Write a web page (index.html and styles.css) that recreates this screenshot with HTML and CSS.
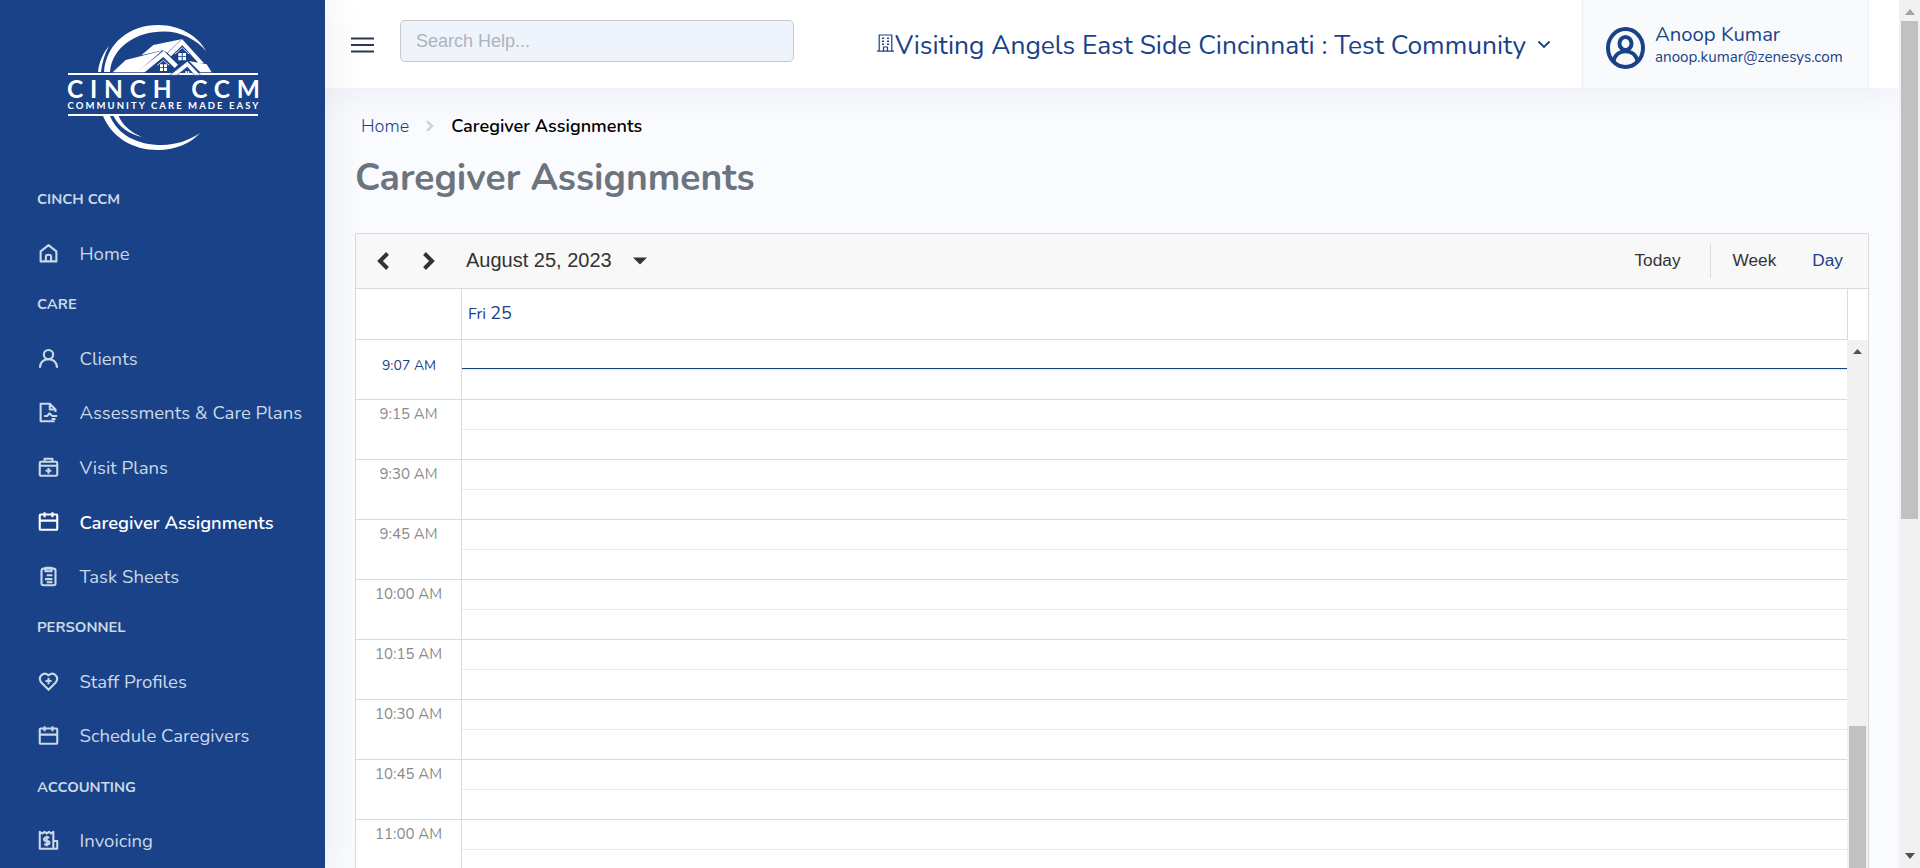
FILE: index.html
```
<!DOCTYPE html>
<html lang="en">
<head>
<meta charset="utf-8">
<title>Caregiver Assignments</title>
<link rel="stylesheet" href="styles.css">
</head>
<body>
<div class="app">
  <aside class="sidebar">
    <svg class="logo" viewBox="0 0 325 175" width="325" height="175" fill="#fff">
      <path d="M104 72C106 43 130 25 158 25C180 25 198 36 206.500 51.500C196 39 180 31.500 164 31.500C136 31.500 112 47 110 72Z"/>
      <path d="M98 72C99 62 103 53 109 46C104.500 54 102 63 101 72Z"/>
      <path d="M103 116H110C118 135 137 145 162 145C176 145 190 140 200 133C191 143 176 150 158 150C132 150 112 137 103 116Z"/>
      <path d="M113.500 116H118.500C123 126 132 133 142 137C129 134 119 127 113.500 116Z"/>
      <path d="M68 73H258V75H68ZM68 114H258V116H68Z"/>
      <g transform="translate(40 10) scale(.33333)">
        <path d="M218 187L257 150L366 122L292 187Z"/>
        <path d="M290 187L371 122L414 164L404 174L370 141L314 187Z"/>
        <path d="M304 136L340 105L424 88L382 128L368 121Z"/>
        <path d="M383 129L426 87L492 160H476L427 106L393 139Z"/>
        <path d="M447 153L500 163L515 187H481Z"/>
        <path d="M389 196L442 154L482 196H464L442 171L411 196Z" stroke="#1a4289" stroke-width="2"/>
        <path d="M352 166L370 151L388 166" fill="none" stroke="#fff" stroke-width="2.500"/>
        <path d="M405 132L427 113L447 132" fill="none" stroke="#fff" stroke-width="2.500"/>
        <path d="M360 163H369V172H360ZM372 163H381V172H372ZM360 174H369V183H360ZM372 174H381V183H372ZM415 129H425V139H415ZM428 129H438V139H428ZM415 141H425V151H415ZM428 141H438V151H428ZM436 184H441V189H436ZM443 184H448V189H443ZM436 191H441V195H436ZM443 191H448V195H443Z"/>
      </g>
      <text class="logo-name" x="67" y="98" textLength="193">CINCH CCM</text>
      <text class="logo-tag" x="67.500" y="109" textLength="191">COMMUNITY CARE MADE EASY</text>
    </svg>
    <nav class="nav">
      <h2>CINCH CCM</h2>
      <a><svg viewBox="0 0 24 24"><path d="M3 9.500 12 2.500 21 9.500V21H3ZM9 21V15.500Q9 13.500 12 13.500T15 15.500V21"/></svg>Home</a>
      <h2>CARE</h2>
      <a><svg viewBox="0 0 24 24"><circle cx="12" cy="7.500" r="5.300"/><path d="M2.200 22.500C2.200 9.500 21.800 9.500 21.800 22.500"/></svg>Clients</a>
      <a><svg viewBox="0 0 24 24"><path d="M19 22H3V2H13.500L20 8.500V11.500M13.500 2.500V8.500H20M7 16H10.500L13 13L16.500 16H22M15.500 19.500H20"/></svg>Assessments &amp; Care Plans</a>
      <a><svg viewBox="0 0 24 24"><rect x="2" y="5.500" width="20" height="16" rx="1.500"/><path d="M7.500 5V2H16.500V5M2 10H22M12 12.500V19M8.700 15.700H15.300"/></svg>Visit Plans</a>
      <a class="active"><svg viewBox="0 0 24 24"><rect x="2" y="4" width="20" height="17.500" rx="1"/><path d="M2 11H22M7.500 1.500V7M16.500 1.500V7"/></svg>Caregiver Assignments</a>
      <a><svg viewBox="0 0 24 24"><rect x="4" y="3" width="16" height="19" rx="2"/><path d="M8.500 2H15.500V6H8.500ZM10 10.500H16.500M8 15H16.500M10 18.500H16.500"/></svg>Task Sheets</a>
      <h2>PERSONNEL</h2>
      <a><svg viewBox="0 0 24 24"><path d="M12 21.500L4 13.500C-1 7 6 0 12 5C18 0 25 7 20 13.500ZM12 8V15M8.500 11.500H15.500"/></svg>Staff Profiles</a>
      <a><svg viewBox="0 0 24 24"><rect x="2" y="4" width="20" height="17.500" rx="1"/><path d="M2 11H22M7.500 1.500V7M16.500 1.500V7"/></svg>Schedule Caregivers</a>
      <h2>ACCOUNTING</h2>
      <a><svg viewBox="0 0 24 24"><path d="M2 2L5 4L7.500 2L10 4L12.500 2L15 4L17.500 2V12.500H22V21.500H2ZM17.500 12V21M13 8.500H9.500Q7 8.500 7 10.500T9.500 12.500H10.500Q13 12.500 13 14.500T10.500 16.500H7M10 6.500V18.500"/></svg>Invoicing</a>
    </nav>
  </aside>

  <div class="page">
    <header class="topbar">
      <svg class="burger" width="23" height="16" viewBox="0 0 23 16"><path d="M0 1.500H23M0 8H23M0 14.500H23" stroke="#2b3a4f" stroke-width="2.200"/></svg>
      <div class="search">Search Help...</div>
      <div class="community">
        <svg class="building" width="17" height="18" viewBox="0 0 17 18" fill="none" stroke="#1a4289" stroke-width="1.200"><path d="M0 17.200H17M2.200 17V1H14.800V17M6.500 17V13H10.500V17"/><path d="M5 4.200H7M10 4.200H12M5 7.200H7M10 7.200H12M5 10.200H7M10 10.200H12" stroke-width="1.500"/></svg>
        <span>Visiting Angels East Side Cincinnati : Test Community</span>
        <svg class="chevron" width="14" height="9" viewBox="0 0 14 9" fill="none" stroke="#1a4289" stroke-width="1.900"><path d="M1.500 1.500L7 7L12.500 1.500"/></svg>
      </div>
      <div class="profile">
        <svg width="40" height="42" viewBox="0 0 40 42" fill="none" stroke="#1a4289" stroke-width="4"><ellipse cx="20.500" cy="21" rx="17.500" ry="19"/><ellipse cx="20.500" cy="16.500" rx="6" ry="6.500"/><path d="M8.500 34C11.500 21 29.500 21 32.500 34"/></svg>
        <div class="who"><div class="name">Anoop Kumar</div><div class="email">anoop.kumar@zenesys.com</div></div>
      </div>
    </header>

    <main class="main">
      <div class="crumbs">
        <span class="crumb-home">Home</span>
        <svg width="8" height="12" viewBox="0 0 8 12" fill="none" stroke="#ced4da" stroke-width="2.600"><path d="M1 1.200L6 6L1 10.800"/></svg>
        <b>Caregiver Assignments</b>
      </div>
      <h1>Caregiver Assignments</h1>

      <section class="calendar">
        <div class="toolbar">
          <svg width="12" height="18" viewBox="0 0 12 18" fill="none" stroke="#333" stroke-width="4"><path d="M10.500 1.500L3 9L10.500 16.500"/></svg>
          <svg class="next" width="12" height="18" viewBox="0 0 12 18" fill="none" stroke="#333" stroke-width="4"><path d="M1.500 1.500L9 9L1.500 16.500"/></svg>
          <span class="date">August 25, 2023</span>
          <svg class="caret" width="14" height="8" viewBox="0 0 14 8"><path d="M0 .5H14L7 7.500Z" fill="#333"/></svg>
          <span class="today">Today</span>
          <span class="week">Week</span>
          <span class="day">Day</span>
        </div>
        <div class="dayhead">
          <div class="corner"></div>
          <div class="dayname">Fri <span>25</span></div>
          <div class="gap"></div>
        </div>
        <div class="grid">
          <div class="slots">
            <div class="slot now"><div class="time">9:07 AM</div><div class="cell"><div class="nowline"></div></div></div>
            <div class="slot"><div class="time">9:15 AM</div><div class="cell"></div></div>
            <div class="slot"><div class="time">9:30 AM</div><div class="cell"></div></div>
            <div class="slot"><div class="time">9:45 AM</div><div class="cell"></div></div>
            <div class="slot"><div class="time">10:00 AM</div><div class="cell"></div></div>
            <div class="slot"><div class="time">10:15 AM</div><div class="cell"></div></div>
            <div class="slot"><div class="time">10:30 AM</div><div class="cell"></div></div>
            <div class="slot"><div class="time">10:45 AM</div><div class="cell"></div></div>
            <div class="slot"><div class="time">11:00 AM</div><div class="cell"></div></div>
          </div>
          <div class="track">
            <svg width="9" height="5" viewBox="0 0 9 5"><path d="M0 5L4.500 0L9 5Z" fill="#505050"/></svg>
            <div class="thumb"></div>
          </div>
        </div>
      </section>
    </main>
  </div>

  <div class="scrollbar">
    <svg width="10" height="6" viewBox="0 0 10 6"><path d="M0 6L5 0L10 6Z" fill="#a3a3a3"/></svg>
    <div class="thumb"></div>
    <svg class="down" width="10" height="6" viewBox="0 0 10 6"><path d="M0 0H10L5 6Z" fill="#505050"/></svg>
  </div>
</div>
</body>
</html>
```
FILE: styles.css
```
* { box-sizing: border-box; }
body { margin: 0; font-family: "Nunito", "Lato", sans-serif; overflow: hidden; background: #fafbff; }
svg { display: block; flex: none; }
.app { display: flex; height: 868px; overflow: hidden; }

/* Sidebar */
.sidebar { position: relative; z-index: 4; width: 325px; flex: none; background: #1a4289; color: #c9d9e6; box-shadow: 0 0 40px rgba(30, 40, 60, .09); }
.logo-name { font: 700 24.500px "Lato", sans-serif; }
.logo-tag { font: 700 9.500px "Lato", sans-serif; }
.nav { padding-top: 1px; }
.nav h2 { margin: 0; height: 50.500px; padding: 0 0 3px 37px; line-height: 47.500px; font-size: 14.750px; font-weight: 700; }
.nav a { display: flex; align-items: center; height: 54.500px; padding-left: 38px; font-size: 18.550px; white-space: nowrap; }
.nav a svg { width: 21px; height: 21px; margin: -1px 20.500px 0 0; fill: none; stroke: currentColor; stroke-width: 2.400; stroke-linejoin: round; }
.nav .active { color: #fff; font-weight: 600; font-size: 18.400px; }

/* Top bar */
.page { flex: 1; min-width: 0; }
.topbar { position: relative; z-index: 3; display: flex; height: 88px; background: #fff; color: #1a4289; box-shadow: 0 0 40px rgba(30, 40, 60, .08); }
.burger { margin: 37px 0 0 26px; }
.search { width: 394px; height: 42px; margin: 20px 0 0 26px; padding: 0 15px; border: 1px solid #c8c8c8; border-radius: 5px; background: #eff3fb; color: #adb5bd; font: 18px/40px "Liberation Sans", sans-serif; }
.community { display: flex; margin-left: auto; font-size: 26.350px; line-height: 90px; white-space: nowrap; }
.building { margin: 34px 1px 0 0; }
.chevron { margin: 40px 31px 0 11px; }
.profile { display: flex; width: 287px; margin-right: 30px; padding: 27px 0 0 22px; border: solid #eceff6; border-width: 0 1px; background: #f9fafc; }
.who { margin-left: 10px; margin-top: -7px; }
.name { font-size: 20.300px; line-height: 28px; }
.email { font-size: 15.200px; line-height: 19px; }

/* Content */
.main { padding: 0 30px; }
.crumbs { display: flex; align-items: center; height: 38px; margin-top: 19px; padding-left: 6px; font-size: 18px; }
.crumb-home { color: #1a4289; font-weight: 300; }
.crumbs svg { margin: 0 17px 0 17px; }
.crumbs b { color: #000; font-weight: 600; font-size: 18.100px; }
h1 { margin: 8px 0 0; height: 50px; font-size: 37.200px; line-height: 50px; font-weight: 700; color: #6c757d; }

/* Calendar */
.calendar { margin-top: 30px; width: 1514px; border: 1px solid #dbdbdb; background: #fff; }
.toolbar { display: flex; align-items: center; height: 55px; padding: 0 25px 0 21px; border-bottom: 1px solid #dbdbdb; background: #f8f8f8; color: #333; font: 17.250px "Liberation Sans", sans-serif; }
.next { margin-left: 34px; }
.date { margin: -2px 0 0 31px; font-size: 20px; }
.caret { margin-left: 21px; margin-top: -1px; }
.today { margin-left: auto; padding-right: 29px; line-height: 32px; padding-bottom: 2px; border-right: 1px solid #dbdbdb; }
.week { margin: -2px 36px 0 22px; }
.day { margin-top: -2px; color: #1a4289; }
.dayhead { display: flex; height: 51px; }
.corner { width: 106px; border: solid #dbdbdb; border-width: 0 1px 1px 0; }
.dayname { flex: 1; padding-left: 6px; line-height: 48px; color: #1a4289; font-size: 16px; border: solid #dbdbdb; border-width: 0 1px 1px 0; }
.dayname span { font-size: 18px; }
.gap { width: 20px; }
.grid { display: flex; height: 600px; }
.slots { flex: 1; }
.slot { display: flex; height: 60px; border-bottom: 1px solid #dbdbdb; }
.time { width: 106px; padding-top: 4px; border-right: 1px solid #dbdbdb; text-align: center; color: #8a8a8a; font-size: 15px; line-height: 20px; }
.now .time { padding: 16px 0 0 1px; font-size: 14px; color: #1a4289; }
.cell { flex: 1; height: 30px; border-bottom: 1px dotted #d4d4d4; }
.nowline { margin-top: 28px; height: 1px; background: #1a4289; }
.track { width: 21px; padding-top: 9px; background: #f1f1f1; }
.track svg { margin: 0 auto 0 6px; }
.track .thumb { width: 17px; height: 300px; margin: 372px 0 0 2px; background: #c1c1c1; }

/* Page scrollbar */
.scrollbar { position: relative; z-index: 4; display: flex; flex-direction: column; align-items: center; width: 21px; background: #f1f1f1; padding: 9px 0 9px; }
.scrollbar .thumb { width: 17px; height: 498px; margin-top: 6px; background: #c1c1c1; }
.down { margin-top: auto; }
```
